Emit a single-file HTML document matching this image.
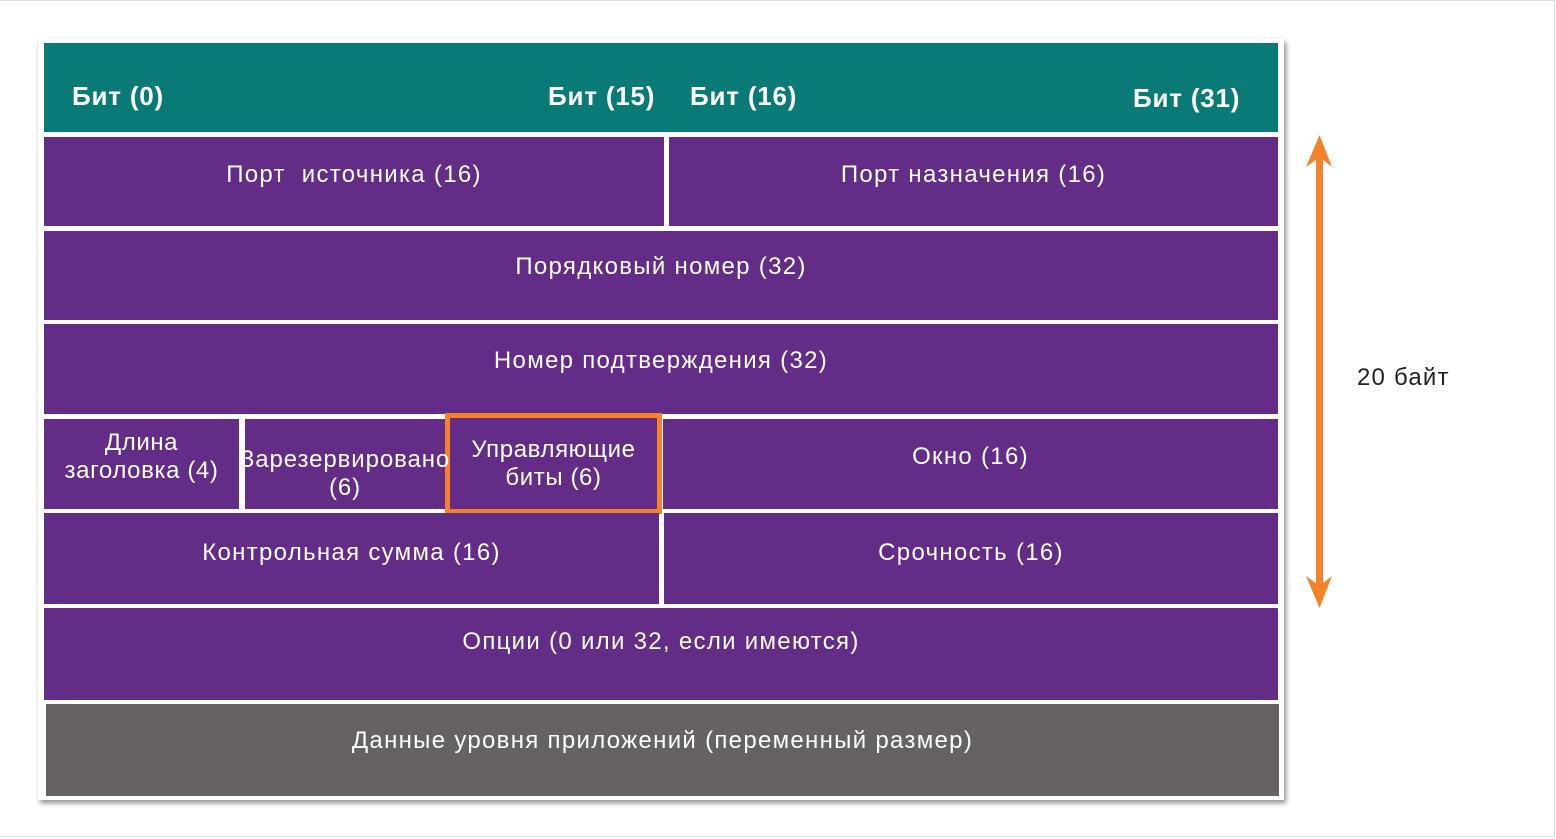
<!DOCTYPE html>
<html><head><meta charset="utf-8"><style>
body{margin:0;width:1556px;height:839px;background:#fff;position:relative;overflow:hidden;font-family:"Liberation Sans",sans-serif;}
.frame{position:absolute;left:0;top:0;width:1554px;height:835px;border:1px solid #ddd;border-left:none;}
.box{position:absolute;left:38px;top:39px;width:1246px;height:761px;background:#fff;box-shadow:2px 3px 5px rgba(0,0,0,.45);}
.c{position:absolute;background:#632d87;color:#fff;font-size:24px;letter-spacing:1.3px;display:flex;align-items:center;justify-content:center;text-align:center;line-height:28px;}
.h{position:absolute;color:#fff;font-weight:bold;font-size:26px;letter-spacing:0.8px;top:81px;}
</style></head><body>
<div class="frame"></div>
<div class="box"></div>
<div class="c" style="left:44px;top:43px;width:1234px;height:89px;background:#0a7a76"></div>
<div class="h" style="left:72px">Бит (0)</div>
<div class="h" style="left:548px">Бит (15)</div>
<div class="h" style="left:690px">Бит (16)</div>
<div class="h" style="left:1133px;top:83px">Бит (31)</div>

<div class="c" style="left:44px;top:137px;width:620px;height:89px;padding-bottom:14px;box-sizing:border-box">Порт&nbsp; источника (16)</div>
<div class="c" style="left:669px;top:137px;width:609px;height:89px;padding-bottom:14px;box-sizing:border-box">Порт назначения (16)</div>
<div class="c" style="left:44px;top:231px;width:1234px;height:89px;padding-bottom:18px;box-sizing:border-box">Порядковый номер (32)</div>
<div class="c" style="left:44px;top:324px;width:1234px;height:90px;padding-bottom:16px;box-sizing:border-box">Номер подтверждения (32)</div>
<div class="c" style="left:44px;top:419px;width:195px;height:90px;padding-bottom:14px;box-sizing:border-box;letter-spacing:0.6px">Длина<br>заголовка (4)</div>
<div class="c" style="left:445px;top:413px;width:217px;height:101px;border:5px solid #f5822a;box-sizing:border-box;background:#632d87;letter-spacing:0.6px">Управляющие<br>биты (6)</div>
<div class="c" style="left:245px;top:419px;width:200px;height:90px;padding-top:20px;box-sizing:border-box;white-space:nowrap;letter-spacing:0.9px;z-index:2">Зарезервировано<br>(6)</div>
<div class="c" style="left:663px;top:419px;width:615px;height:90px;padding-bottom:14px;box-sizing:border-box">Окно (16)</div>
<div class="c" style="left:44px;top:513px;width:615px;height:91px;padding-bottom:12px;box-sizing:border-box">Контрольная сумма (16)</div>
<div class="c" style="left:664px;top:513px;width:614px;height:91px;padding-bottom:12px;box-sizing:border-box">Срочность (16)</div>
<div class="c" style="left:44px;top:608px;width:1234px;height:92px;padding-bottom:24px;box-sizing:border-box">Опции (0 или 32, если имеются)</div>
<div class="c" style="left:46px;top:704px;width:1233px;height:92px;padding-bottom:18px;box-sizing:border-box;background:#666262">Данные уровня приложений (переменный размер)</div>

<svg style="position:absolute;left:1300px;top:130px" width="40" height="485">
<rect x="16" y="20" width="7" height="440" fill="#f5822a"/>
<polygon points="19.5,5 6,37 19.5,27 32,37" fill="#f5822a"/>
<polygon points="19.5,478 6,446 19.5,456 32,446" fill="#f5822a"/>
</svg>
<div style="position:absolute;left:1357px;top:364px;font-size:24px;letter-spacing:1.2px;color:#222">20 байт</div>
</body></html>
